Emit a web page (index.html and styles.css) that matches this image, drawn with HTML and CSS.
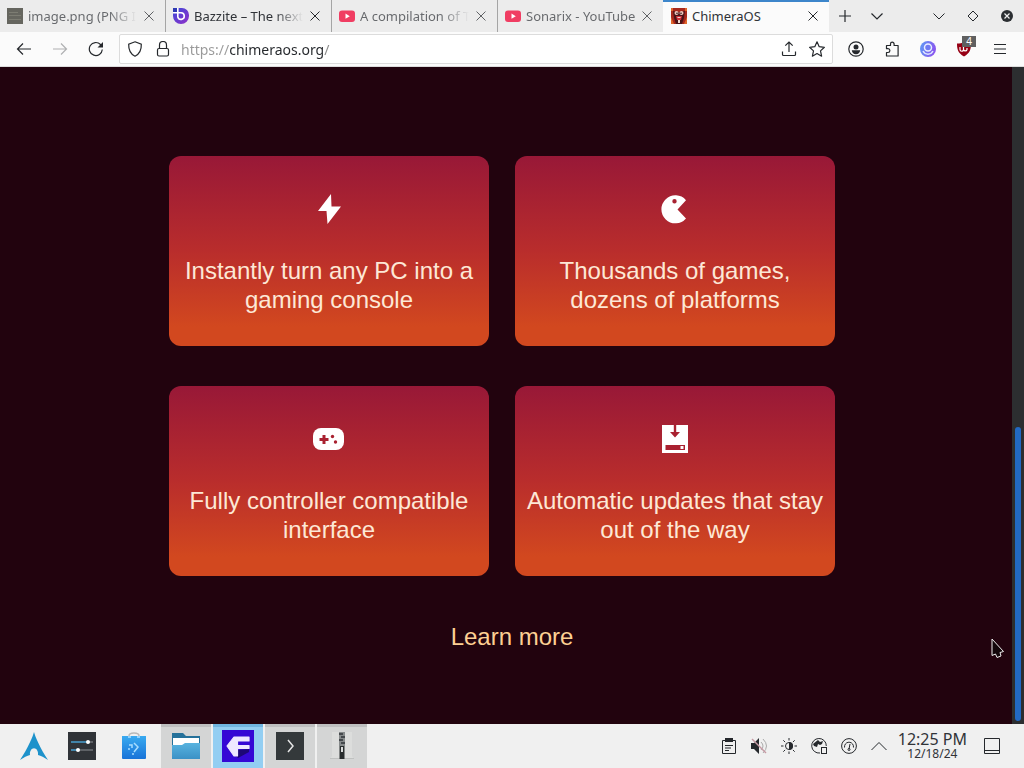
FILE: index.html
```html
<!DOCTYPE html>
<html lang="en">
<head>
<meta charset="UTF-8">
<meta name="viewport" content="width=device-width, initial-scale=1.0">
<title>ChimeraOS</title>
<link rel="stylesheet" href="styles.css">
</head>
<body>
<header class="browser">
    <div class="tabbar">
        <div class="tab faded">
            <svg class="favicon" viewBox="0 0 16 16"><path fill="#66665f" d="M0 0h16v16H0z"/><path stroke="#7d7d73" d="M2 4.500h9M2 7.500h12M2 11.500h12"/></svg>
            <a class="tab-title" href="#">image.png (PNG I</a>
            <button class="tab-close" aria-label="Close tab"><svg width="10" height="10" viewBox="0 0 10 10"><path d="M.5.5l9 9M9.500.5l-9 9"/></svg></button>
        </div>
        <div class="tab">
            <svg class="favicon" viewBox="0 0 16 16"><defs><linearGradient id="bz" x2="1" y2="1"><stop offset="0" stop-color="#3c49d8"/><stop offset="1" stop-color="#9230c8"/></linearGradient></defs><path fill="url(#bz)" d="M4 0h5a7 7 0 0 1 7 7v1a8 8 0 0 1-16 0V4h4z"/><path fill="#2e3ab4" d="M0 0h4v4H0z"/><path fill="none" stroke="#fff" stroke-width="1.600" d="M4.800 0v9a3.300 3.300 0 1 0 3.300-4.200H0"/></svg>
            <a class="tab-title" href="#">Bazzite – The next</a>
            <button class="tab-close" aria-label="Close tab"><svg width="10" height="10" viewBox="0 0 10 10"><path d="M.5.5l9 9M9.500.5l-9 9"/></svg></button>
        </div>
        <div class="tab faded">
            <svg class="favicon" viewBox="0 0 16 16"><rect y="2.500" width="16" height="11.500" rx="3" fill="#f03d62"/><path fill="#fff" d="M6.500 5.600v5.200l4.300-2.600z"/></svg>
            <a class="tab-title" href="#">A compilation of T</a>
            <button class="tab-close" aria-label="Close tab"><svg width="10" height="10" viewBox="0 0 10 10"><path d="M.5.5l9 9M9.500.5l-9 9"/></svg></button>
        </div>
        <div class="tab faded">
            <svg class="favicon" viewBox="0 0 16 16"><rect y="2.500" width="16" height="11.500" rx="3" fill="#f03d62"/><path fill="#fff" d="M6.500 5.600v5.200l4.300-2.600z"/></svg>
            <a class="tab-title short" href="#">Sonarix - YouTube</a>
            <button class="tab-close" aria-label="Close tab"><svg width="10" height="10" viewBox="0 0 10 10"><path d="M.5.5l9 9M9.500.5l-9 9"/></svg></button>
        </div>
        <div class="tab active">
            <svg class="favicon" viewBox="0 0 16 16"><path fill="#a8281c" d="M0 0h16v16H0z"/><path fill="#e0672a" d="M0 9l3 7H0zM16 9l-3 7h3zM0 0h2v3H0zM14 0h2v3h-2z"/><path fill="#4a1418" d="M2 3l4 1h4l4-1-1 7-2 6H5L3 10z"/><circle cx="5.500" cy="5" r="2" fill="#efc9be"/><circle cx="10.500" cy="5" r="2" fill="#efc9be"/><circle cx="6" cy="5.200" r=".8" fill="#2a1014"/><circle cx="10" cy="5.200" r=".8" fill="#2a1014"/><path fill="#cf3038" d="M5 8h6l-1 4H6z"/><path fill="#f3d9cf" d="M6 9h4l-1 1H7zM7 12h2v3H7z"/></svg>
            <a class="tab-title" href="#">ChimeraOS</a>
            <button class="tab-close" aria-label="Close tab"><svg width="10" height="10" viewBox="0 0 10 10"><path d="M.5.5l9 9M9.500.5l-9 9"/></svg></button>
        </div>
        <button class="tab-button" aria-label="New tab"><svg width="12" height="12" viewBox="0 0 12 12"><path d="M6 0v12M0 6h12"/></svg></button>
        <button class="tab-button" aria-label="List all tabs"><svg width="12" height="12" viewBox="0 0 12 12"><path d="M.5 3.500L6 9l5.500-5.500"/></svg></button>
        <div class="window-buttons">
            <button aria-label="Minimize"><svg width="12" height="12" viewBox="0 0 12 12"><path stroke-width="1" d="M.5 3.500L6 9l5.500-5.500"/></svg></button>
            <button aria-label="Maximize"><svg width="12" height="12" viewBox="0 0 12 12"><path stroke-width="1" d="M6 1l5 5-5 5-5-5z"/></svg></button>
            <button aria-label="Close"><svg width="12" height="12" viewBox="0 0 12 12"><circle cx="6" cy="6" r="6" fill="#2b2e32" stroke="none"/><path stroke="#f0f0f0" d="M3.500 3.500l5 5M8.500 3.500l-5 5"/></svg></button>
        </div>
    </div>
    <div class="toolbar">
        <button class="tool" aria-label="Back"><svg width="16" height="16" viewBox="0 0 16 16"><path d="M15 8H1.500M7 2.500L1.500 8 7 13.500"/></svg></button>
        <button class="tool" aria-label="Forward" disabled><svg width="16" height="16" viewBox="0 0 16 16"><path d="M1 8h13.500M9 2.500L14.500 8 9 13.500"/></svg></button>
        <button class="tool" aria-label="Reload"><svg width="16" height="16" viewBox="0 0 16 16"><path d="M14.300 8.500A6.500 6.500 0 1 1 12.500 3.500L14 5"/><path fill="#25282c" stroke="none" d="M15 1v5.500H9.500z"/></svg></button>
        <div class="urlbar">
            <button class="url-button" aria-label="Tracking protection"><svg width="16" height="16" viewBox="0 0 16 16"><path d="M8 .8l6.300 2.400c.2 5-1.300 9.500-6.300 12C3 12.700 1.500 8.200 1.700 3.200z"/></svg></button>
            <button class="url-button" aria-label="Site information"><svg width="16" height="16" viewBox="0 0 16 16"><rect x="2.500" y="7.500" width="11" height="7.500" rx="1.500"/><path d="M4.500 7.500V4a3.500 3.500 0 0 1 7 0v3.500"/></svg></button>
            <input class="url" type="text" aria-label="Address" value="https://chimeraos.org/">
            <button class="url-button" aria-label="Share"><svg width="16" height="16" viewBox="0 0 16 16"><path d="M8 11V1M4.300 4.700L8 1l3.700 3.700M1.500 10.500v3q0 1 1 1h11q1 0 1-1v-3"/></svg></button>
            <button class="url-button" aria-label="Bookmark this page"><svg width="16" height="16" viewBox="0 0 16 16"><path stroke-linejoin="round" d="M8 .8l2.200 4.900 5.200.6-3.900 3.600 1.100 5.300L8 12.600l-4.600 2.600 1.100-5.300L.6 6.300l5.200-.6z"/></svg></button>
        </div>
        <button class="tool" aria-label="Account"><svg width="16" height="16" viewBox="0 0 16 16"><circle cx="8" cy="8" r="7.200"/><circle cx="8" cy="6" r="2.500" fill="#25282c" stroke="none"/><path fill="#25282c" stroke="none" d="M3.800 9.300h8.400c-.3 2.500-2 4-4.200 4s-3.900-1.500-4.200-4z"/></svg></button>
        <button class="tool" aria-label="Extensions"><svg width="16" height="16" viewBox="0 0 16 16"><path stroke-linejoin="round" d="M2.500 15V11.500H4a1.900 1.900 0 0 0 0-3.800H2.500V4.500h4V3a1.800 1.800 0 0 1 3.600 0v1.500h4V15z"/></svg></button>
        <button class="tool" aria-label="Profile"><svg width="16" height="16" viewBox="0 0 16 16"><defs><linearGradient id="pf" x2="1" y2=".3"><stop offset="0" stop-color="#5c9cf5"/><stop offset="1" stop-color="#8857ef"/></linearGradient></defs><circle cx="8" cy="8" r="8" fill="url(#pf)" stroke="none"/><circle cx="8" cy="6.500" r="3.500" fill="#6f7af2" stroke="#e9eeff" stroke-width="1.500"/><path stroke="#dfe7ff" stroke-width="1.500" d="M3 10c2 4.200 8 4.200 10 0"/></svg></button>
        <button class="tool" aria-label="uBlock Origin"><svg width="16" height="16" viewBox="0 0 16 16"><path fill="#960014" stroke="none" d="M8 1c2 1 4 1.500 7 1.500 0 6-1 9.500-7 13C2 12 1 8.500 1 2.500 4 2.500 6 2 8 1z"/><path stroke="#fff" d="M4 6v2.500a1.500 1.500 0 0 0 3.500 0V6M7.500 8.500a1.800 1.800 0 0 0 3.500 0V7"/></svg><span class="badge">4</span></button>
        <button class="tool" aria-label="Menu"><svg width="12" height="12" viewBox="0 0 12 12"><path d="M0 1.500h12M0 6h12M0 10.500h12"/></svg></button>
    </div>
</header>

<main class="page">
    <div class="features">
        <div class="card">
            <svg class="card-icon" viewBox="0 0 32 32"><path d="M18 1L5 18h8.500L14.500 31 28 13.500h-9.500z"/></svg>
            <p>Instantly turn any PC into a gaming console</p>
        </div>
        <div class="card">
            <svg class="card-icon" viewBox="0 0 32 32"><path fill-rule="evenodd" d="M27 7.200A14 14 0 1 0 27 25.500L18.500 16.500zM15.500 6a2.200 2.200 0 1 1 0 4.400 2.200 2.200 0 0 1 0-4.400z"/></svg>
            <p>Thousands of games, dozens of platforms</p>
        </div>
        <div class="card">
            <svg class="card-icon" viewBox="0 0 32 32"><rect y="5" width="31" height="22" rx="8"/><path class="cutout" d="M9.500 12h3v3h3v3h-3v3h-3v-3h-3v-3h3z"/><circle class="cutout" cx="19.500" cy="13.500" r="1.700"/><circle class="cutout" cx="22.500" cy="19" r="1.700"/></svg>
            <p>Fully controller compatible interface</p>
        </div>
        <div class="card">
            <svg class="card-icon" viewBox="0 0 32 32"><path d="M3 2h26v28H3z"/><path class="cutout" d="M14.800 2h2.400v7H21l-5 5.500L11 9h3.800zM6.500 22h19.500v5H6.500z"/><path d="M21.500 23h3v3h-3z"/></svg>
            <p>Automatic updates that stay out of the way</p>
        </div>
    </div>
    <a class="learn-more" href="#">Learn more</a>
    <div class="scrollbar"><div class="thumb"></div></div>
    <svg class="cursor" width="14" height="21" viewBox="0 0 14 21"><path fill="#12060a" stroke="#eee" stroke-linejoin="round" d="M1 1v16.500l3.500-1.500L6 19.500l4-1.500-1-3.500 3.500-1z"/></svg>
</main>

<footer class="taskbar">
    <button class="task" aria-label="Application launcher"><svg width="28" height="28" viewBox="0 0 28 28"><path fill="#1d92cb" d="M14 0c-1 4-6 16-14 28 4-2.500 7-4.300 10-5-.5-4 1.500-6.800 4-6.800s4.500 2.800 4 6.800c3 .7 6 2.500 10 5C20 16 15 4 14 0z"/></svg></button>
    <button class="task" aria-label="System settings"><svg width="28" height="28" viewBox="0 0 28 28"><path fill="#303338" d="M0 0h28v28H0z"/><path stroke="#479fce" stroke-width="1.500" d="M3 10h17M3 18h7"/><path stroke="#6d7176" stroke-width="1.500" d="M20 10h5M10 18h15"/><circle cx="20" cy="10" r="2" fill="#fff"/><circle cx="10" cy="18" r="2" fill="#fff"/></svg></button>
    <button class="task" aria-label="Discover"><svg width="28" height="28" viewBox="0 0 28 28"><defs><linearGradient id="bag" x2="0" y2="1"><stop offset="0" stop-color="#39aaf0"/><stop offset="1" stop-color="#1873d8"/></linearGradient></defs><path fill="none" stroke="#b9b9b9" stroke-width="1.500" d="M9 4c0-4 10-4 10 0v3"/><path fill="url(#bag)" d="M2 4h24v22q0 1-1 1H3q-1 0-1-1z"/><path fill="#8fd2ff" d="M8 4h3v2H8zM17 4h3v2h-3z"/><path fill="none" stroke="#a7ddff" stroke-width="1.500" d="M9 13h3v3M14 11l4 4-4 5"/><circle cx="9" cy="17" r="1" fill="#a7ddff"/><circle cx="13" cy="22" r="1" fill="#a7ddff"/></svg></button>
    <button class="task open" aria-label="Dolphin"><svg width="30" height="28" viewBox="0 0 30 28"><defs><linearGradient id="fold" x2="0" y2="1"><stop offset="0" stop-color="#58b3df"/><stop offset="1" stop-color="#3b91c6"/></linearGradient></defs><path fill="#25719a" d="M1 1h11l3 3h14v10H1z"/><path fill="#fff" d="M2 6h26v8H2z"/><path fill="url(#fold)" d="M1 13h10l3-2h15v16H1z"/></svg></button>
    <button class="task open current" aria-label="Browser"><svg width="32" height="32" viewBox="0 0 32 32"><path fill="#3508d5" d="M0 0h32v32H0z"/><path fill="#1d0776" d="M14 26l2-6 11-1v3l-11 6z"/><path fill="#eee8ff" stroke="#eee8ff" stroke-linejoin="round" d="M5 16l7-9h15v4H15.500v4.500H27v3H15.500V26H12z"/></svg></button>
    <button class="task open" aria-label="Konsole"><svg width="28" height="28" viewBox="0 0 28 28"><path fill="#34393b" d="M0 0h28v28H0z"/><path fill="none" stroke="#e5e5e5" stroke-width="1.500" d="M12 8l5 6-5 6"/></svg></button>
    <button class="task open" aria-label="Ark"><svg width="28" height="28" viewBox="0 0 28 28"><path fill="#dcdddc" d="M4 0h20v24l2 3H2l2-3z"/><path fill="#bfc1c0" d="M2 26h24v1H2z"/><path fill="#85898a" d="M11 0h6v14h-6z"/><path stroke="#30353a" stroke-width="1.500" d="M11 2h4M13 5h4M11 8h4M13 11h4"/><path fill="#292d2e" d="M11.500 14h5v13h-5z"/><path fill="#dadcdc" d="M13 15h2v5h-2z"/></svg></button>
    <div class="tray">
        <button aria-label="Clipboard"><svg width="16" height="16" viewBox="0 0 16 16"><path d="M1.500 2.500h13v13h-13zM4 7.500h8M4 10h6M4 12.500h4"/><path fill="#25282c" stroke="none" d="M4 0h8v4H4z"/></svg></button>
        <button aria-label="Volume muted"><svg width="16" height="16" viewBox="0 0 16 16"><path fill="#25282c" stroke="none" d="M0 5h3l5-5v16l-5-5H0z"/><path stroke="#aaa" d="M10 4q4 4 0 8M12 1q7 7 0 14"/><path stroke="#c69aa4" stroke-width="1.500" d="M1 1l14 14"/></svg></button>
        <button aria-label="Brightness"><svg width="16" height="16" viewBox="0 0 16 16"><circle cx="8" cy="8" r="3.500"/><path fill="#25282c" stroke="none" d="M8 4a4 4 0 0 1 0 8z"/><path d="M8 0v2.500M8 13.500V16M0 8h2.500M13.500 8H16M2.300 2.300l1.800 1.800M11.900 11.900l1.800 1.800M13.700 2.300l-1.800 1.800M4.100 11.900l-1.800 1.800"/></svg></button>
        <button aria-label="Network"><svg width="16" height="16" viewBox="0 0 16 16"><path d="M9 15A7.300 7.300 0 1 1 15.300 8"/><path fill="#25282c" stroke="none" d="M2 6l5-4 2 2 3-1-1 3-2 1-2-1-1 3-3-1z"/><rect x="10.500" y="9.500" width="5" height="6"/></svg></button>
        <button aria-label="Performance"><svg width="16" height="16" viewBox="0 0 16 16"><circle cx="8" cy="8" r="7.400"/><path d="M3.500 9.500C3 2.500 13 2.500 12.500 9.500M8 11l1-5"/><circle cx="8" cy="11.500" r="1"/></svg></button>
        <button aria-label="Show hidden icons"><svg width="16" height="16" viewBox="0 0 16 16"><path d="M.5 12L8 4.500l7.500 7.500"/></svg></button>
        <div class="clock"><time class="time">12:25 PM</time><time class="date">12/18/24</time></div>
        <button class="peek" aria-label="Show desktop"><svg width="16" height="16" viewBox="0 0 16 16"><path d="M.5.5h15v15H.5zM.5 12.500h15"/></svg></button>
    </div>
</footer>
</body>
</html>
```
FILE: styles.css
```css
* {
    box-sizing: border-box;
}
body {
    margin: 0;
    height: 100vh;
    display: flex;
    flex-direction: column;
    font-family: "Noto Sans", sans-serif;
    color: #303338;
    background-color: #22030e;
}
button {
    display: flex;
    align-items: center;
    justify-content: center;
    padding: 0;
    border: none;
    background: none;
    flex-shrink: 0;
    font: inherit;
    color: inherit;
}
button svg {
    fill: none;
    stroke: #25282c;
    stroke-width: 1.2;
}
a {
    color: inherit;
    text-decoration: none;
}

/* tabs */
.tabbar {
    display: flex;
    height: 32px;
    background-color: #ececec;
}
.tab {
    display: flex;
    align-items: center;
    flex: 0 1 166px;
    min-width: 0;
    padding: 0 8px 0 7px;
    border-right: 1px solid #a5a5a5;
    font-size: 13px;
}
.tab.faded .tab-title,
.tab.faded .tab-close {
    opacity: 0.7;
}
.tab.active {
    border-right: none;
    border-top: 2px solid #3d86cb;
    padding: 0 8px 2px;
    background-color: #fbfbfb;
}
.tab:has(+ .active) {
    flex-basis: 165px;
    border-right: none;
}
.favicon {
    width: 16px;
    height: 16px;
    margin-right: 5px;
    flex-shrink: 0;
}
.tab-title {
    flex: 1;
    overflow: hidden;
    white-space: nowrap;
    line-height: 20px;
    mask-image: linear-gradient(to left, transparent 4px, #000 32px);
}
.tab-title.short,
.active .tab-title {
    mask-image: none;
}
.tab-close {
    width: 16px;
    height: 20px;
}
.tab-close svg {
    stroke-width: 1;
}
.tab-button {
    width: 32px;
}
.window-buttons {
    display: flex;
    margin-left: auto;
}
.window-buttons button {
    width: 34px;
}

/* toolbar */
.toolbar {
    display: flex;
    align-items: center;
    height: 35px;
    padding: 0 6px;
    background-color: #fbfbfb;
    border-bottom: 1px solid #ddd;
}
.tool {
    width: 36px;
    height: 30px;
    position: relative;
}
.tool:disabled {
    opacity: 0.35;
}
.badge {
    position: absolute;
    top: 2px;
    right: 6px;
    width: 14px;
    height: 11px;
    background-color: #606060;
    color: #fff;
    font-size: 10px;
    line-height: 11px;
}
.urlbar {
    display: flex;
    align-items: center;
    flex: 1;
    height: 30px;
    margin: 0 5px;
    padding: 0 1px;
    background-color: #fff;
    border: 1px solid #dcdcdc;
    border-radius: 2px;
}
.url-button {
    width: 28px;
    height: 28px;
}
/* the host name is darker than the scheme and the path */
.url {
    flex: 1;
    min-width: 0;
    height: 28px;
    padding: 0 4px;
    border: none;
    outline: none;
    font-family: inherit;
    font-size: 14px;
    color: transparent;
    background: linear-gradient(to right, #999 52px, #25282c 52px, #25282c 146px, #888 146px);
    background-clip: text;
    -webkit-background-clip: text;
}

/* page */
.page {
    position: relative;
    flex: 1;
    overflow: hidden;
    padding-top: 89px;
    text-align: center;
    font-family: "Liberation Sans", Arial, sans-serif;
    font-size: 24px;
    line-height: 29px;
}
.features {
    display: grid;
    grid-template-columns: 320px 320px;
    justify-content: center;
    gap: 40px 26px;
    margin-right: 20px;
}
.card {
    padding: 37px 10px 32px;
    border-radius: 12px;
    color: #fde8d6;
    background: linear-gradient(#981837, #b92d2c 50%, #d2481f 90%);
}
.card-icon {
    display: block;
    width: 32px;
    height: 32px;
    margin: 0 auto 31px;
    fill: #fff;
}
.card-icon .cutout {
    fill: #a92130;
}
.card p {
    margin: 0;
}
.learn-more {
    display: inline-block;
    margin-top: 46px;
    color: #fdd093;
}
.scrollbar {
    position: absolute;
    top: 0;
    right: 0;
    bottom: 0;
    width: 12px;
    padding: 0 3px 3px;
    display: flex;
    align-items: flex-end;
    background-color: #2c2e30;
}
.thumb {
    width: 100%;
    height: 45%;
    border-radius: 3px;
    background-color: #2269c3;
}
.cursor {
    position: absolute;
    right: 19px;
    bottom: 65px;
}

/* taskbar */
.taskbar {
    display: flex;
    gap: 2px;
    height: 44px;
    padding: 0 24px 0 9px;
    background-color: #f0f0f0;
}
.task {
    width: 50px;
}
.task:first-child {
    width: 46px;
    padding-left: 4px;
}
.task svg {
    stroke: none;
}
.task.open {
    background-color: #d4d5d5;
    border-top: 3px solid #bebfc0;
    padding-bottom: 3px;
}
.task.current {
    background-color: #93cef2;
    border-top-color: #70b5e0;
}
.tray {
    display: flex;
    margin-left: auto;
}
.tray button {
    width: 30px;
}
.tray button svg {
    stroke-width: 1;
}
.clock {
    display: flex;
    flex-direction: column;
    align-items: center;
    justify-content: center;
    padding: 0 4px;
    white-space: nowrap;
}
.time {
    font-size: 16px;
    line-height: 16px;
}
.date {
    font-size: 12px;
    line-height: 14px;
}
.tray .peek {
    width: 16px;
    margin-left: 13px;
}
```
